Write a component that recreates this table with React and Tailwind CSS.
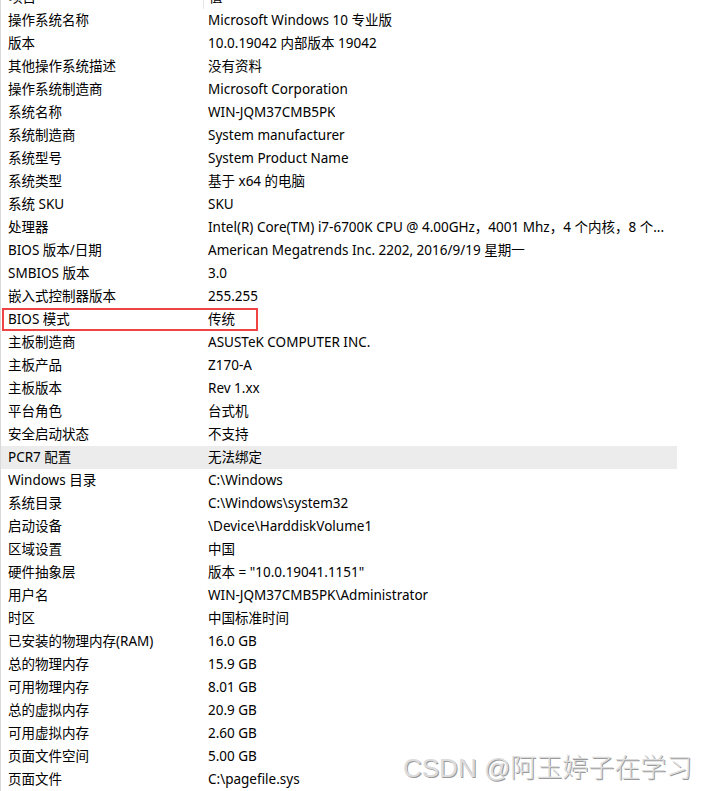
import React from 'react';

const rows = [
  ['操作系统名称', 'Microsoft Windows 10 专业版'],
  ['版本', '10.0.19042 内部版本 19042'],
  ['其他操作系统描述', '没有资料'],
  ['操作系统制造商', 'Microsoft Corporation'],
  ['系统名称', 'WIN-JQM37CMB5PK'],
  ['系统制造商', 'System manufacturer'],
  ['系统型号', 'System Product Name'],
  ['系统类型', '基于 x64 的电脑'],
  ['系统 SKU', 'SKU'],
  ['处理器', 'Intel(R) Core(TM) i7-6700K CPU @ 4.00GHz，4001 Mhz，4 个内核，8 个...'],
  ['BIOS 版本/日期', 'American Megatrends Inc. 2202, 2016/9/19 星期一'],
  ['SMBIOS 版本', '3.0'],
  ['嵌入式控制器版本', '255.255'],
  ['BIOS 模式', '传统'],
  ['主板制造商', 'ASUSTeK COMPUTER INC.'],
  ['主板产品', 'Z170-A'],
  ['主板版本', 'Rev 1.xx'],
  ['平台角色', '台式机'],
  ['安全启动状态', '不支持'],
  ['PCR7 配置', '无法绑定'],
  ['Windows 目录', 'C:\\Windows'],
  ['系统目录', 'C:\\Windows\\system32'],
  ['启动设备', '\\Device\\HarddiskVolume1'],
  ['区域设置', '中国'],
  ['硬件抽象层', '版本 = "10.0.19041.1151"'],
  ['用户名', 'WIN-JQM37CMB5PK\\Administrator'],
  ['时区', '中国标准时间'],
  ['已安装的物理内存(RAM)', '16.0 GB'],
  ['总的物理内存', '15.9 GB'],
  ['可用物理内存', '8.01 GB'],
  ['总的虚拟内存', '20.9 GB'],
  ['可用虚拟内存', '2.60 GB'],
  ['页面文件空间', '5.00 GB'],
  ['页面文件', 'C:\\pagefile.sys'],
];

const font = "font-['Noto_Sans','Noto_Sans_CJK_SC',sans-serif]";

export default function App() {
  return (
    <div className={`relative w-[703px] h-[791px] overflow-hidden bg-white text-[13.5px] text-black ${font}`}>
      <div className="flex flex-col border-l border-[#d9d9d9] -mt-[14px] h-[806px]">
        {/* header row, mostly scrolled off */}
        <div className="flex h-[23px] items-center">
          <div className="w-[203px] h-full flex items-center pl-[8px] border-r border-[#e5e5e5]">项目</div>
          <div className="pl-[5px]">值</div>
        </div>
        {rows.map(([k, v]) => (
          <div
            key={k}
            className={`flex h-[23px] items-center w-[676px] ${k === 'PCR7 配置' ? 'bg-[#ececec]' : ''}`}
          >
            <div className="w-[201px] pl-[7px] whitespace-nowrap">{k}</div>
            <div className="pl-[6px] whitespace-nowrap overflow-hidden">{v}</div>
          </div>
        ))}
      </div>

      {/* highlight box */}
      <div className="absolute left-[2px] top-[308px] w-[256px] h-[23px] border-2 border-[#f04343]" />

      {/* watermark */}
      <div className="absolute left-[403px] top-[751px] text-[26px] leading-[34px] font-light text-[#dcdcdc] [text-shadow:1px_1px_0_#9a9a9a,-1px_-1px_0_#ffffff] font-['Liberation_Sans','Noto_Sans_CJK_SC',sans-serif]">
        CSDN @阿玉婷子在学习
      </div>
    </div>
  );
}
